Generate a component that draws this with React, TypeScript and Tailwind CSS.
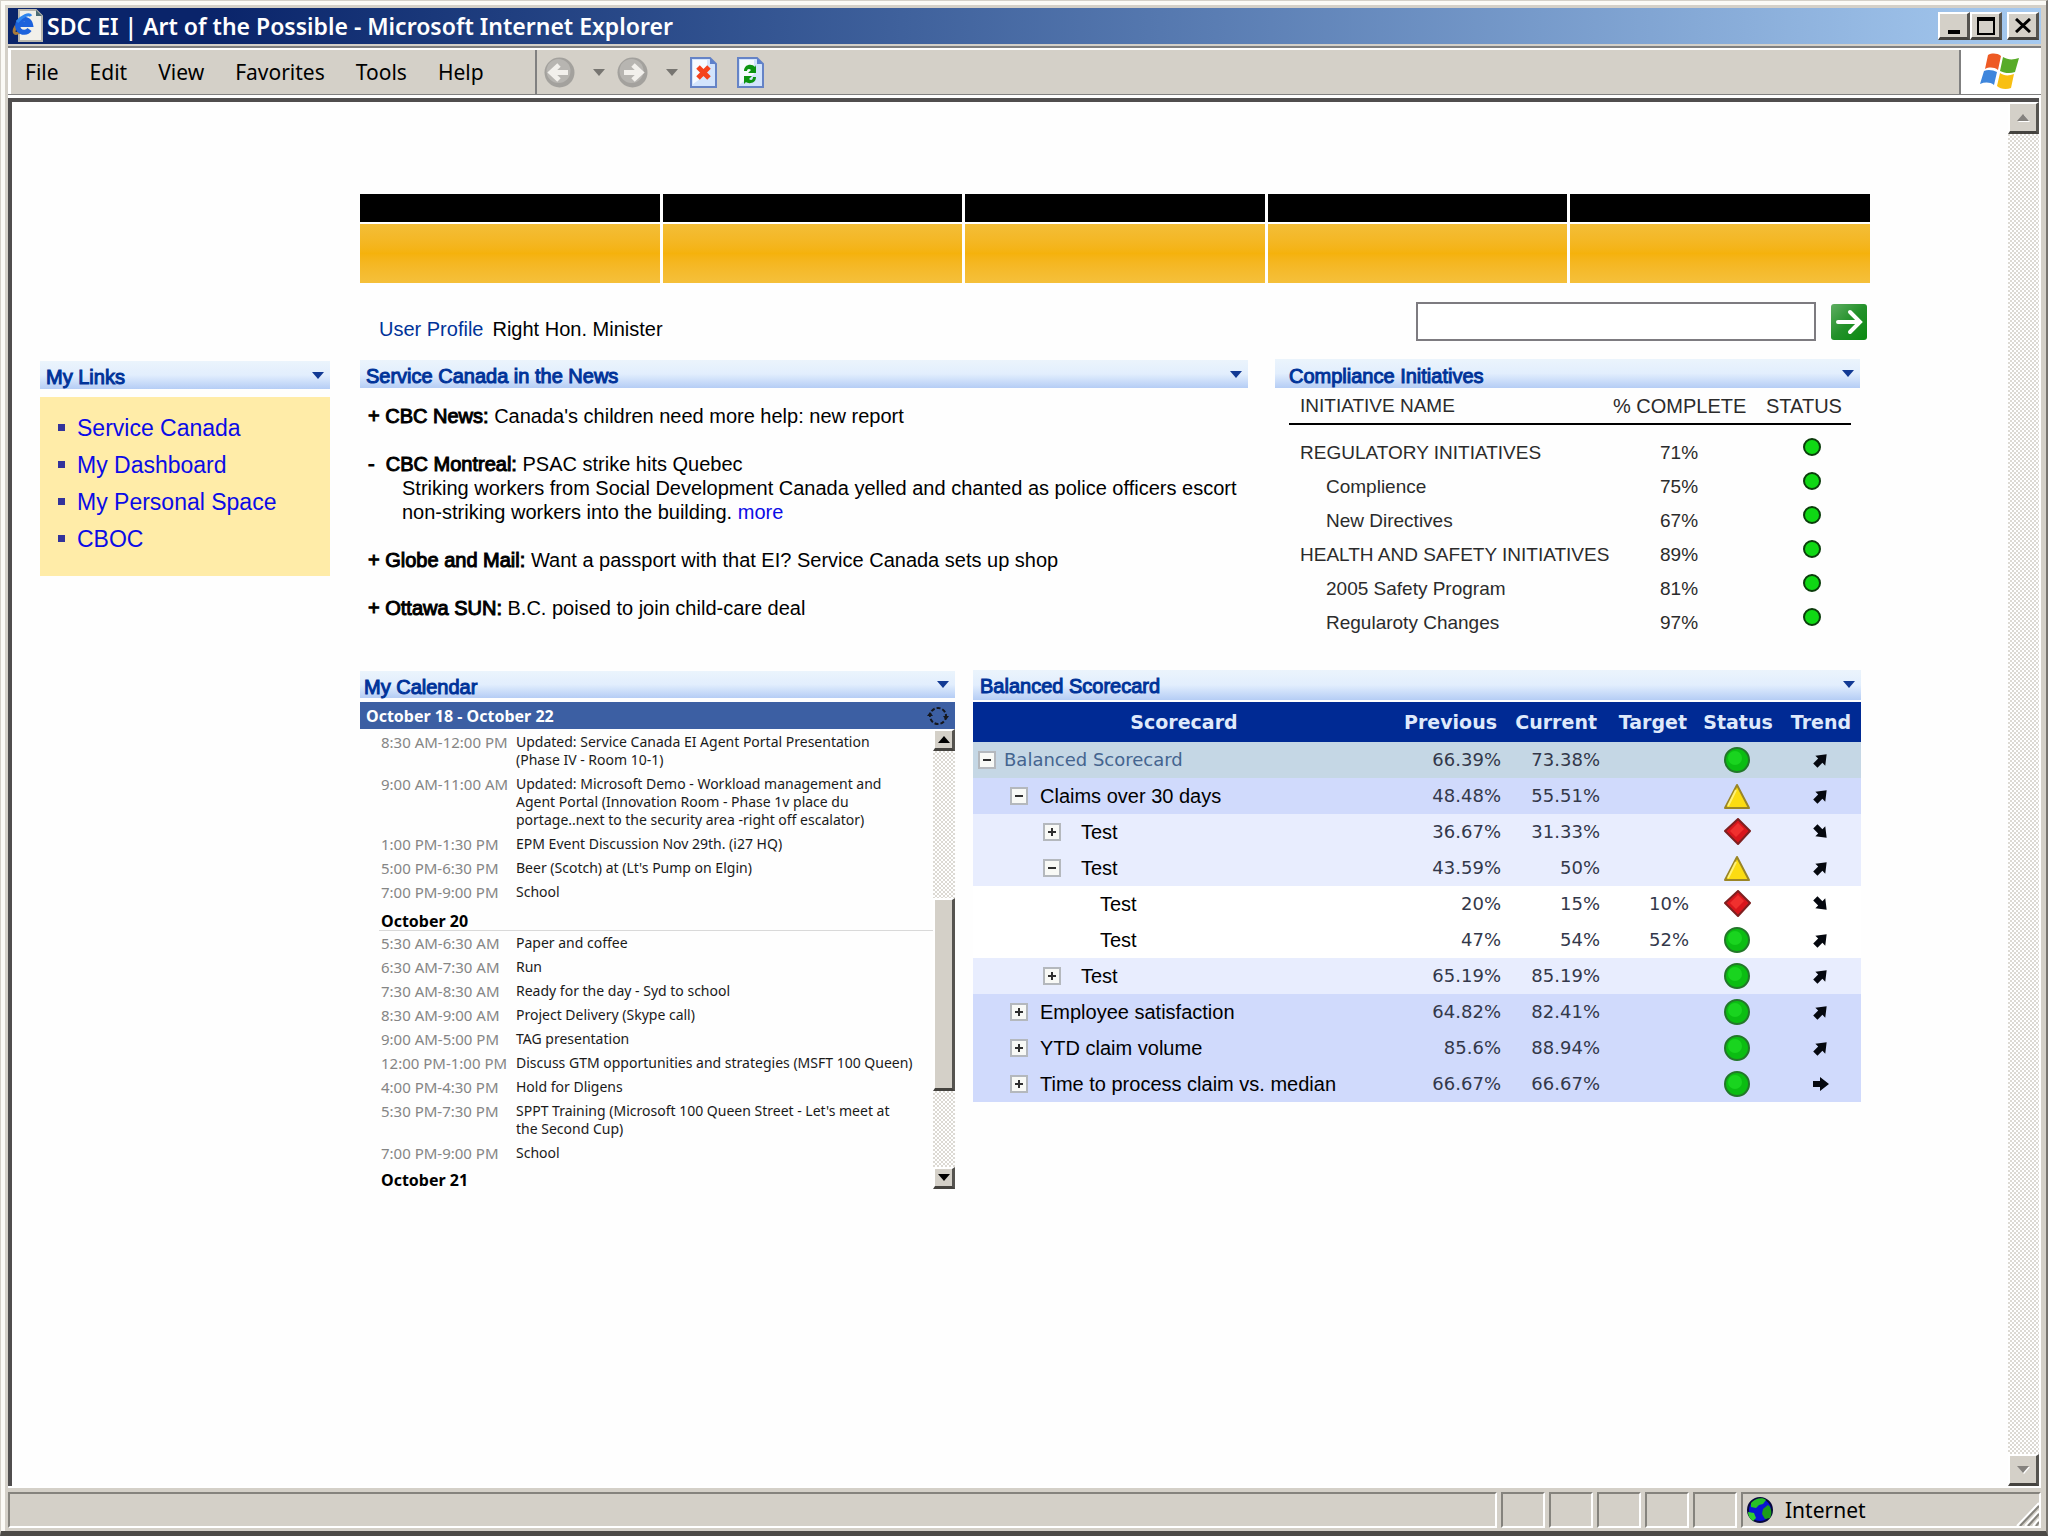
import React, { useState } from 'react';

type Status = 'green' | 'yellow' | 'red';
type Trend = 'up' | 'down' | 'flat';

const menuItems = ['File', 'Edit', 'View', 'Favorites', 'Tools', 'Help'];

const links = ['Service Canada', 'My Dashboard', 'My Personal Space', 'CBOC'];

const initiatives = [
  { name: 'REGULATORY INITIATIVES', percent: '71%', group: true },
  { name: 'Complience', percent: '75%', group: false },
  { name: 'New Directives', percent: '67%', group: false },
  { name: 'HEALTH AND SAFETY INITIATIVES', percent: '89%', group: true },
  { name: '2005 Safety Program', percent: '81%', group: false },
  { name: 'Regularoty Changes', percent: '97%', group: false },
];

const calendarDays = [
  {
    day: '',
    events: [
      { time: '8:30 AM-12:00 PM', lines: ['Updated: Service Canada EI Agent Portal Presentation', '(Phase IV - Room 10-1)'] },
      {
        time: '9:00 AM-11:00 AM',
        lines: [
          'Updated: Microsoft Demo - Workload management and',
          'Agent Portal (Innovation Room - Phase 1v place du',
          'portage..next to the security area -right off escalator)',
        ],
      },
      { time: '1:00 PM-1:30 PM', lines: ['EPM Event Discussion Nov 29th. (i27 HQ)'] },
      { time: '5:00 PM-6:30 PM', lines: ["Beer (Scotch) at (Lt's Pump on Elgin)"] },
      { time: '7:00 PM-9:00 PM', lines: ['School'] },
    ],
  },
  {
    day: 'October 20',
    events: [
      { time: '5:30 AM-6:30 AM', lines: ['Paper and coffee'] },
      { time: '6:30 AM-7:30 AM', lines: ['Run'] },
      { time: '7:30 AM-8:30 AM', lines: ['Ready for the day - Syd to school'] },
      { time: '8:30 AM-9:00 AM', lines: ['Project Delivery (Skype call)'] },
      { time: '9:00 AM-5:00 PM', lines: ['TAG presentation'] },
      { time: '12:00 PM-1:00 PM', lines: ['Discuss GTM opportunities and strategies (MSFT 100 Queen)'] },
      { time: '4:00 PM-4:30 PM', lines: ['Hold for Dligens'] },
      { time: '5:30 PM-7:30 PM', lines: ["SPPT Training (Microsoft 100 Queen Street - Let's meet at", 'the Second Cup)'] },
      { time: '7:00 PM-9:00 PM', lines: ['School'] },
    ],
  },
];

interface ScoreRow {
  name: string;
  level: number;
  box?: 'plus' | 'minus';
  previous: string;
  current: string;
  target?: string;
  status: Status;
  trend: Trend;
}

const scoreRows: ScoreRow[] = [
  { name: 'Balanced Scorecard', level: 0, box: 'minus', previous: '66.39%', current: '73.38%', status: 'green', trend: 'up' },
  { name: 'Claims over 30 days', level: 1, box: 'minus', previous: '48.48%', current: '55.51%', status: 'yellow', trend: 'up' },
  { name: 'Test', level: 2, box: 'plus', previous: '36.67%', current: '31.33%', status: 'red', trend: 'down' },
  { name: 'Test', level: 2, box: 'minus', previous: '43.59%', current: '50%', status: 'yellow', trend: 'up' },
  { name: 'Test', level: 3, previous: '20%', current: '15%', target: '10%', status: 'red', trend: 'down' },
  { name: 'Test', level: 3, previous: '47%', current: '54%', target: '52%', status: 'green', trend: 'up' },
  { name: 'Test', level: 2, box: 'plus', previous: '65.19%', current: '85.19%', status: 'green', trend: 'up' },
  { name: 'Employee satisfaction', level: 1, box: 'plus', previous: '64.82%', current: '82.41%', status: 'green', trend: 'up' },
  { name: 'YTD claim volume', level: 1, box: 'plus', previous: '85.6%', current: '88.94%', status: 'green', trend: 'up' },
  { name: 'Time to process claim vs. median', level: 1, box: 'plus', previous: '66.67%', current: '66.67%', status: 'green', trend: 'flat' },
];

const rowBackgrounds = ['bg-[#c5d7e5]', 'bg-[#d0dafc]', 'bg-[#e8edfe]', 'bg-white'];
const rowIndents = ['pl-[5px] gap-2', 'pl-[37px] gap-3', 'pl-[70px] gap-5', 'pl-[127px]'];

const bevel = 'border-t-2 border-l-2 border-t-white border-l-white border-r-[3px] border-b-[3px] border-r-[#55534f] border-b-[#45433f] bg-[#d4d0c8]';
const track = 'bg-[repeating-conic-gradient(#ffffff_0_25%,#dcd9d3_0_50%)] bg-[length:4px_4px]';

/* ---------- Icons ---------- */

function PageIcon() {
  return (
    <svg width="32" height="34" viewBox="0 0 32 34" aria-hidden="true">
      <path d="M7 1h17l6 6v25H7z" fill="#f1f0ea" stroke="#b9b7ae" strokeWidth="2" />
      <path d="M24 1v6h6z" fill="#4c6c74" />
      <path d="M9 22c-6 5-9 2-5-5" fill="none" stroke="#a87a3a" strokeWidth="3" />
      <path d="M17.500 20.500a6.500 6.500 0 1 1 1-5H6" fill="none" stroke="#1c62dc" strokeWidth="5" />
      <path d="M5 13c5-6 12-9 14-6" fill="none" stroke="#2f86ee" strokeWidth="3" />
    </svg>
  );
}

function NavCircle({ back }: { back?: boolean }) {
  return (
    <svg width="31" height="31" viewBox="0 0 31 31" aria-hidden="true">
      <circle cx="15.500" cy="15.500" r="15" fill="#a3a19d" />
      <circle cx="14.500" cy="14" r="12" fill="#b7b5b1" />
      <path
        d={back ? 'M24 15.500H9M15 8l-8 7.500 8 7.500' : 'M7 15.500h15M16 8l8 7.500-8 7.500'}
        fill="none"
        stroke="#f2f0ec"
        strokeWidth="5"
      />
    </svg>
  );
}

function SheetIcon({ refresh }: { refresh?: boolean }) {
  return (
    <svg width="27" height="31" viewBox="0 0 27 31" aria-hidden="true">
      <path d="M1 1h19l6 6v23H1z" fill="#d3e4fc" stroke="#6583c6" strokeWidth="2" />
      <path d="M3 3h14v14L3 27z" fill="#f6faff" />
      <path d="M20 1v6h6z" fill="#5d80cc" />
      {refresh ? (
        <g fill="#0d9412">
          <path d="M7 14c0-7 8-8 11-4l1-2v8h-8l3-3c-2-2-4-1-4 1z" />
          <path d="M19 20c0 7-8 7-10 5l-2 2v-8h8l-3 3c2 2 4 1 4-2z" />
        </g>
      ) : (
        <path d="M8 10l11 11M19 10L8 21" stroke="#f5421c" strokeWidth="5" />
      )}
    </svg>
  );
}

function WindowsFlag() {
  return (
    <svg width="42" height="38" viewBox="0 0 42 38" aria-hidden="true">
      <path d="M9 2c4-2 9-2 13 1l-3 14c-4-3-9-3-13-1z" fill="#ee5a24" />
      <path d="M24 4c5 3 10 3 16 1l-4 14c-5 2-11 1-15-1z" fill="#57ab27" />
      <path d="M5 18c4-2 9-1 13 1l-3 13c-4-3-9-3-14-1z" fill="#3f86dc" />
      <path d="M21 20c4 3 9 3 14 1l-3 14c-5 2-11 1-14-2z" fill="#f8bf12" />
    </svg>
  );
}

function Globe() {
  return (
    <svg width="26" height="26" viewBox="0 0 26 26" aria-hidden="true">
      <circle cx="13" cy="13" r="12" fill="#0a14d2" stroke="#08083c" strokeWidth="2" />
      <path d="M4 6c4-5 12-6 15-3l-3 4-4 1-3 3-5-1z" fill="#27c027" />
      <path d="M16 12l5-4c4 3 4 9 2 13l-5 1-3-5z" fill="#1c9c1c" />
      <path d="M1 15l6 1 2 5-3 3c-3-2-5-5-5-9z" fill="#32cd32" />
    </svg>
  );
}

function Triangle({ up, className }: { up?: boolean; className: string }) {
  return (
    <svg width="12" height="7" viewBox="0 0 12 7" className={className} aria-hidden="true">
      <path d={up ? 'M0 7h12L6 0z' : 'M0 0h12L6 7z'} fill="currentColor" />
    </svg>
  );
}

function StatusIcon({ status }: { status: Status }) {
  return (
    <svg width="28" height="28" viewBox="0 0 28 28" className="mx-auto block" role="img" aria-label={status}>
      {status === 'green' && (
        <>
          <circle cx="13" cy="14" r="12" fill="#0bbd12" stroke="#23772a" strokeWidth="2" />
          <circle cx="11" cy="12" r="7" fill="#19d41f" />
        </>
      )}
      {status === 'yellow' && (
        <>
          <path d="M13 3l12 23H1z" fill="#fbdc12" stroke="#9a8526" strokeWidth="2" strokeLinejoin="round" />
          <path d="M12 8l-8 16" stroke="#fff27a" strokeWidth="2" />
        </>
      )}
      {status === 'red' && (
        <>
          <path d="M14 1l12 12-12 13L1 13z" fill="#d8161c" stroke="#7e2020" strokeWidth="2" strokeLinejoin="round" />
          <path d="M14 5l6 6-8 8-6-6z" fill="#f0302e" />
        </>
      )}
    </svg>
  );
}

const trendTurns = { up: 'rotate(-45 8 8)', down: 'rotate(45 8 8)', flat: '' };

function TrendIcon({ trend }: { trend: Trend }) {
  return (
    <svg width="16" height="16" viewBox="0 0 16 16" className="mx-auto block" role="img" aria-label={trend}>
      <path d="M0 5h7V1l9 7-9 7v-4H0z" fill="#05080f" transform={trendTurns[trend]} />
    </svg>
  );
}

/* ---------- Shared pieces ---------- */

function PanelHeader({ title, className = '' }: { title: string; className?: string }) {
  return (
    <header
      className={`flex items-center justify-between bg-linear-to-b from-[#ebf4fc] via-[#e2eefd] to-[#b5cdf5] pr-1.5 text-[#003399] ${className}`}
    >
      <h2 className="pt-1 text-[20px] leading-6 [-webkit-text-stroke:1px]">{title}</h2>
      <button type="button" aria-label={`${title} menu`}>
        <Triangle className="text-[#123a94]" />
      </button>
    </header>
  );
}

function ExpandBox({ kind }: { kind: 'plus' | 'minus' }) {
  return (
    <button
      type="button"
      aria-label={kind === 'plus' ? 'Expand' : 'Collapse'}
      className="flex size-[18px] shrink-0 items-center justify-center border-2 border-[#b4b8bd] bg-[#f8f9f6]"
    >
      <svg width="10" height="10" viewBox="0 0 10 10" aria-hidden="true">
        <path d={kind === 'plus' ? 'M1 5h8M5 1v8' : 'M1 5h8'} stroke="#2f2f2f" strokeWidth="2" />
      </svg>
    </button>
  );
}

/* ---------- Window chrome ---------- */

function TitleBar() {
  return (
    <div className="flex h-9 items-center bg-linear-to-r from-[#0a246a] from-10% to-[#a6caf0] pl-1 pr-[2px]">
      <PageIcon />
      <h1 className="flex-1 pl-[3px] font-['Noto_Sans',sans-serif] text-[23px] font-semibold leading-7 text-white">
        SDC EI | Art of the Possible - Microsoft Internet Explorer
      </h1>
      <div className="flex">
        <button type="button" aria-label="Minimize" className={`flex h-7 w-8 items-end justify-center pb-[3px] ${bevel}`}>
          <span className="h-1 w-3 bg-black" />
        </button>
        <button type="button" aria-label="Maximize" className={`flex h-7 w-8 items-center justify-center ${bevel}`}>
          <span className="h-[18px] w-[18px] border-2 border-t-4 border-black" />
        </button>
        <button type="button" aria-label="Close" className={`ml-[5px] flex h-7 w-8 items-center justify-center ${bevel}`}>
          <svg width="16" height="15" viewBox="0 0 16 15" aria-hidden="true">
            <path d="M1 1l14 13M15 1L1 14" stroke="#000" strokeWidth="3" />
          </svg>
        </button>
      </div>
    </div>
  );
}

function MenuBar() {
  return (
    <div className="mt-[2px] border-b border-t-2 border-[#808080]">
      <div className="flex h-[46px] border-l-[3px] border-r-2 border-t-2 border-white">
        <nav className="flex w-[526px] items-center gap-[31px] border-r-2 border-r-[#808080] pl-[14px] font-['Noto_Sans',sans-serif] text-[21px] leading-7 text-black">
          {menuItems.map((item) => (
            <button type="button" key={item}>
              {item}
            </button>
          ))}
        </nav>
        <div className="flex flex-1 items-center pl-[7px]">
          <button type="button" aria-label="Back">
            <NavCircle back />
          </button>
          <Triangle className="ml-[18px] text-[#777571]" />
          <button type="button" aria-label="Forward" className="ml-3">
            <NavCircle />
          </button>
          <Triangle className="ml-[18px] text-[#777571]" />
          <button type="button" aria-label="Stop" className="ml-3">
            <SheetIcon />
          </button>
          <button type="button" aria-label="Refresh" className="ml-5">
            <SheetIcon refresh />
          </button>
        </div>
        <div className="flex w-20 items-center justify-center border-l-2 border-[#808080] bg-white">
          <WindowsFlag />
        </div>
      </div>
    </div>
  );
}

function PageScrollbar() {
  return (
    <div className={`flex w-[31px] flex-col justify-between ${track}`}>
      <button type="button" aria-label="Scroll up" className={`flex h-8 items-center justify-center text-[#85827e] ${bevel}`}>
        <Triangle up className="drop-shadow-[1px_1px_0_#ffffff]" />
      </button>
      <button type="button" aria-label="Scroll down" className={`flex h-8 items-center justify-center text-[#85827e] ${bevel}`}>
        <Triangle className="drop-shadow-[1px_1px_0_#ffffff]" />
      </button>
    </div>
  );
}

function StatusBar() {
  const cell = 'border-2 border-b-white border-l-[#85837d] border-r-white border-t-[#85837d]';

  return (
    <footer className="mt-1 flex h-9 gap-1">
      <div className={`flex-1 ${cell}`} />
      {[0, 1, 2, 3, 4].map((slot) => (
        <div key={slot} className={`w-11 ${cell}`} />
      ))}
      <div className={`relative flex w-[300px] items-center gap-3 pl-1 ${cell}`}>
        <Globe />
        <span className="font-['Noto_Sans',sans-serif] text-[21px] leading-7 text-black">Internet</span>
        <svg width="24" height="26" viewBox="0 0 24 26" className="absolute bottom-0 right-0" aria-hidden="true">
          <path d="M2 26L24 3M10 26L24 11M18 26l6-7" stroke="#fff" strokeWidth="2" />
          <path d="M5 26L24 6M13 26L24 14M21 26l3-4" stroke="#85837d" strokeWidth="2" />
        </svg>
      </div>
    </footer>
  );
}

/* ---------- Panels ---------- */

function MyLinks() {
  return (
    <section>
      <PanelHeader title="My Links" className="h-7 pl-1.5" />
      <ul className="mt-2 h-[179px] bg-[#ffeca8] pl-[18px] pt-3">
        {links.map((link) => (
          <li key={link} className="flex h-[37px] items-center gap-3">
            <span className="size-[7px] bg-[#33339b]" />
            <a href="#" className="text-[23px] leading-8 text-[#0b0be6]">
              {link}
            </a>
          </li>
        ))}
      </ul>
    </section>
  );
}

function News() {
  return (
    <section className="min-w-0 flex-1 pt-px">
      <PanelHeader title="Service Canada in the News" className="h-7 pl-1.5" />
      <ul className="mt-4 space-y-6 pl-2 text-[20px] leading-6 text-black">
        <li>
          <b className="font-normal [-webkit-text-stroke:1px]">+ CBC News:</b> Canada's children need more help: new report
        </li>
        <li>
          <b className="font-normal [-webkit-text-stroke:1px]">-&nbsp; CBC Montreal:</b> PSAC strike hits Quebec
          <p className="pl-[34px]">
            Striking workers from Social Development Canada yelled and chanted as police officers escort
            <br />
            non-striking workers into the building.{' '}
            <a href="#" className="text-[#0b0be6]">
              more
            </a>
          </p>
        </li>
        <li>
          <b className="font-normal [-webkit-text-stroke:1px]">+ Globe and Mail:</b> Want a passport with that EI? Service Canada sets up shop
        </li>
        <li>
          <b className="font-normal [-webkit-text-stroke:1px]">+ Ottawa SUN:</b> B.C. poised to join child-care deal
        </li>
      </ul>
    </section>
  );
}

function ComplianceInitiatives() {
  return (
    <section className="mr-[10px] w-[585px]">
      <PanelHeader title="Compliance Initiatives" className="h-[29px] pl-[14px]" />
      <div className="pl-[14px] pr-[9px]">
        <table className="w-full table-fixed text-[19px] leading-6 text-[#2b2b2b]">
          <thead>
            <tr className="h-9 border-b-2 border-black">
              <th className="pl-[11px] text-left font-normal">INITIATIVE NAME</th>
              <th className="w-[145px] text-left text-[20px] font-normal">% COMPLETE</th>
              <th className="w-[93px] pl-2 text-left text-[20px] font-normal">STATUS</th>
            </tr>
          </thead>
          <tbody>
            <tr className="h-3" aria-hidden="true" />
            {initiatives.map((row) => (
              <tr key={row.name} className="h-[34px]">
                <td className={row.group ? 'whitespace-nowrap pl-[11px]' : 'whitespace-nowrap pl-[37px]'}>{row.name}</td>
                <td className="pl-[47px]">{row.percent}</td>
                <td className="pb-3 align-middle">
                  <span className="ml-[45px] block size-[18px] rounded-full border-2 border-[#0b3d0b] bg-[#0fd814]" />
                </td>
              </tr>
            ))}
          </tbody>
        </table>
      </div>
    </section>
  );
}

function Calendar() {
  return (
    <section className="w-[595px] pt-px">
      <PanelHeader title="My Calendar" className="h-[27px] pl-1" />
      <div className="mt-1 flex h-[27px] items-center justify-between bg-[#3c5fa3] pl-1.5 pr-1.5 font-['Noto_Sans',sans-serif] text-[16px] font-bold text-white">
        <h3>October 18 - October 22</h3>
        <button type="button" aria-label="Refresh calendar">
          <svg width="22" height="22" viewBox="0 0 22 22" aria-hidden="true">
            <circle cx="11" cy="11" r="8" fill="none" stroke="#15171c" strokeWidth="2" strokeDasharray="4 2" />
            <path d="M0 11h6L3 7zM16 11h6l-3 4z" fill="#15171c" />
          </svg>
        </button>
      </div>
      <div className="flex">
        <div className="min-w-0 flex-1 pl-[19px] pt-px font-['Noto_Sans',sans-serif] leading-[18px] text-[#1a1a1a]">
          {calendarDays.map((group) => (
            <div key={group.day}>
              {group.day && (
                <h4 className="border-b border-[#d9d9d9] pl-[2px] pt-2 text-[16px] font-bold leading-[18px] text-black">{group.day}</h4>
              )}
              {group.events.map((event) => (
                <div key={event.time} className="flex py-[3px] pl-[2px]">
                  <span className="w-[135px] shrink-0 whitespace-nowrap text-[15px] leading-[18px] text-[#858585]">{event.time}</span>
                  <span className="whitespace-nowrap text-[14px] leading-[18px]">
                    {event.lines.map((line) => (
                      <span key={line} className="block">
                        {line}
                      </span>
                    ))}
                  </span>
                </div>
              ))}
            </div>
          ))}
          <h4 className="pl-[2px] pt-1.5 text-[16px] font-bold leading-[18px] text-black">October 21</h4>
        </div>
        <div className={`flex w-[22px] flex-col ${track}`}>
          <button type="button" aria-label="Scroll up" className={`flex h-[22px] items-center justify-center ${bevel}`}>
            <Triangle up className="text-black" />
          </button>
          <div className={`mt-[147px] h-[193px] ${bevel}`} />
          <button type="button" aria-label="Scroll down" className={`mt-auto flex h-[22px] items-center justify-center ${bevel}`}>
            <Triangle className="text-black" />
          </button>
        </div>
      </div>
    </section>
  );
}

function Scorecard() {
  return (
    <section className="mr-[9px] min-w-0 flex-1">
      <PanelHeader title="Balanced Scorecard" className="h-[30px] pb-[2px] pl-[7px]" />
      <table className="mt-[2px] w-full table-fixed font-['DejaVu_Sans',sans-serif]">
        <thead>
          <tr className="h-10 bg-[#002a94] text-[19px] leading-6 text-[#dfe9fb]">
            <th>Scorecard</th>
            <th className="w-[110px] pr-2 text-right">Previous</th>
            <th className="w-[100px] pr-2 text-right">Current</th>
            <th className="w-[90px] pr-2 text-right">Target</th>
            <th className="w-[86px]">Status</th>
            <th className="w-20">Trend</th>
          </tr>
        </thead>
        <tbody className="text-[18px] leading-6 text-[#33384a]">
          {scoreRows.map((row, index) => (
            <tr key={index} className={`h-9 ${rowBackgrounds[row.level]}`}>
              <td>
                <div className={`flex items-center ${rowIndents[row.level]}`}>
                  {row.box && <ExpandBox kind={row.box} />}
                  {row.level === 0 ? (
                    <span className="text-[#44648f]">{row.name}</span>
                  ) : (
                    <span className="font-['Liberation_Sans',Arial,sans-serif] text-[20px] text-black">{row.name}</span>
                  )}
                </div>
              </td>
              <td className="pr-1 text-right">{row.previous}</td>
              <td className="pr-[5px] text-right">{row.current}</td>
              <td className="pr-1.5 text-right">{row.target}</td>
              <td>
                <StatusIcon status={row.status} />
              </td>
              <td>
                <TrendIcon trend={row.trend} />
              </td>
            </tr>
          ))}
        </tbody>
      </table>
    </section>
  );
}

export default function App() {
  const [query, setQuery] = useState('');

  return (
    <div className="flex min-h-screen flex-col border-b-[5px] border-l border-r-2 border-t border-b-[#4c4a46] border-l-[#d4d0c8] border-r-[#77746f] border-t-[#d4d0c8] bg-[#d4d0c8] font-['Liberation_Sans',Arial,sans-serif]">
      <div className="flex flex-1 flex-col border-l-4 border-t-4 border-[#fbfaf6] pb-[3px] pl-[3px] pr-[5px] pt-[3px]">
        <TitleBar />
        <MenuBar />

        <div className="flex flex-1 border-b-2 border-r-2 border-t-[3px] border-white">
          <div className="flex flex-1 border-l-4 border-t-4 border-[#504e4e] bg-[#fefefe]">
            <main className="grid flex-1 grid-cols-[290px_1fr] items-start gap-[30px] pl-7 pr-[138px] pt-[92px]">
              <aside className="pt-[167px]">
                <MyLinks />
              </aside>

              <div>
                {/* Banner tabs */}
                <div className="grid grid-cols-5 gap-[3px]">
                  {[0, 1, 2, 3, 4].map((tab) => (
                    <div key={tab}>
                      <div className="h-7 bg-black" />
                      <div className="mt-[2px] h-[59px] bg-linear-to-b from-[#f3be37] via-[#f5b20c] to-[#f5c03a]" />
                    </div>
                  ))}
                </div>

                {/* Profile and search */}
                <div className="mt-[19px] flex items-center justify-between pl-[19px] pr-[3px]">
                  <p className="pt-[14px] text-[20px] leading-6 text-black">
                    <a href="#" className="mr-[9px] text-[#003399]">
                      User Profile
                    </a>
                    Right Hon. Minister
                  </p>
                  <form className="flex items-center gap-[15px]" onSubmit={(e) => e.preventDefault()}>
                    <input
                      type="text"
                      aria-label="Search"
                      value={query}
                      onChange={(e) => setQuery(e.target.value)}
                      className="h-[39px] w-[400px] border-2 border-[#7d7b80] bg-white px-2 text-[20px] outline-none"
                    />
                    <button type="submit" aria-label="Go">
                      <svg width="36" height="36" viewBox="0 0 36 36" aria-hidden="true">
                        <defs>
                          <linearGradient id="go" x1="0" y1="0" x2="1" y2="1">
                            <stop offset="0" stopColor="#5fae62" />
                            <stop offset="0.5" stopColor="#23912a" />
                            <stop offset="1" stopColor="#0a8a10" />
                          </linearGradient>
                        </defs>
                        <rect width="36" height="36" rx="3" fill="url(#go)" />
                        <path d="M7 18h20M19 8l10 10-10 10" fill="none" stroke="#fff" strokeWidth="4" strokeLinecap="round" />
                      </svg>
                    </button>
                  </form>
                </div>

                <div className="mt-[18px] flex gap-[27px]">
                  <News />
                  <ComplianceInitiatives />
                </div>

                <div className="mt-[30px] flex items-start gap-[18px]">
                  <Calendar />
                  <Scorecard />
                </div>
              </div>
            </main>
            <PageScrollbar />
          </div>
        </div>

        <StatusBar />
      </div>
    </div>
  );
}
